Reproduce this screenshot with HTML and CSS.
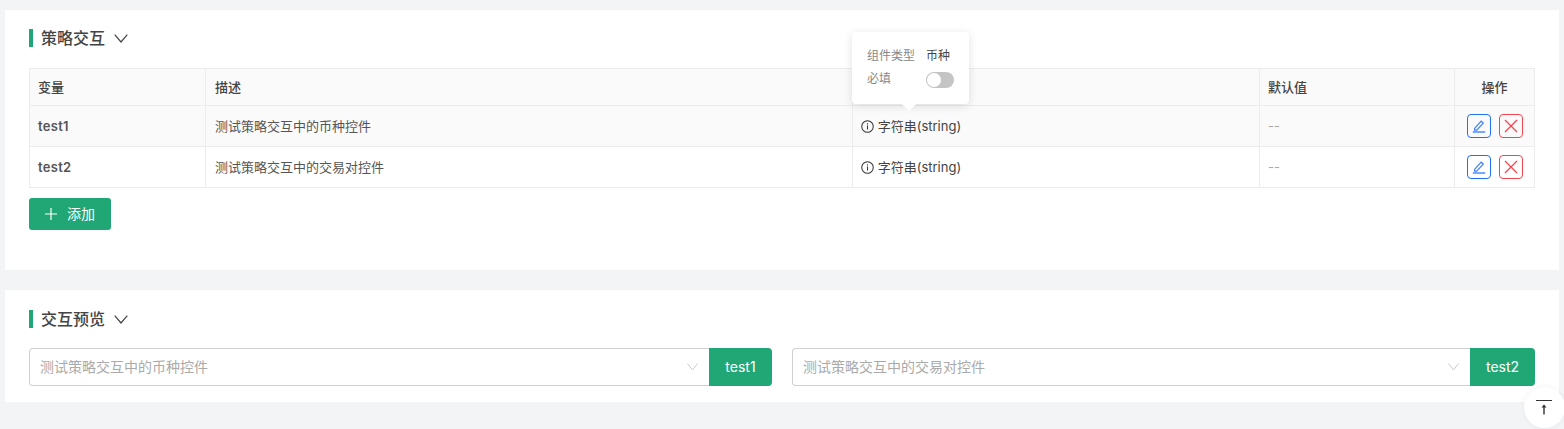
FILE: index.html
```html
<!DOCTYPE html>
<html lang="zh-CN">
<head>
  <meta charset="UTF-8" />
  <title>策略交互</title>
  <link rel="stylesheet" href="styles.css">
</head>
<body>
  <section class="panel panel-table">
    <div class="panel-title">
      <span class="title-text">策略交互</span>
      <svg class="title-arrow" viewBox="0 0 14 9" width="14" height="9"><path d="M.7.7 7 8 13.3.7" fill="none" stroke="#444" stroke-width="1.2"/></svg>
    </div>

    <table class="var-table">
      <colgroup>
        <col class="col-name"><col class="col-desc"><col class="col-type"><col class="col-default"><col class="col-action">
      </colgroup>
      <thead>
        <tr>
          <th>变量</th>
          <th>描述</th>
          <th></th>
          <th>默认值</th>
          <th class="center">操作</th>
        </tr>
      </thead>
      <tbody>
        <tr class="row-hover">
          <td class="var-name">test1</td>
          <td>测试策略交互中的币种控件</td>
          <td class="type-cell">
            <div class="popover">
              <div class="popover-row"><span class="popover-label">组件类型</span><span>币种</span></div>
              <div class="popover-row"><span class="popover-label">必填</span><span class="switch"></span></div>
            </div>
            <svg class="info" viewBox="0 0 14 14" width="13" height="13"><circle cx="7" cy="7" r="6.2" fill="none" stroke="#333" stroke-width="1.1"/><path d="M7 6v4.2M7 3.6v1.2" stroke="#333" stroke-width="1.1"/></svg>
            字符串(string)
          </td>
          <td class="muted">--</td>
          <td>
            <div class="actions">
              <button class="icon-btn edit"><svg viewBox="0 0 14 14" width="14" height="14"><path d="M2.600 9.400 9.200 2.200l2.100 1.900-6.600 7H2.600z" fill="none" stroke="#3f7fff" stroke-width="1.200"/><path d="M.8 13h12.400" stroke="#1f6fff" stroke-width="1.200"/></svg></button>
              <button class="icon-btn del"><svg viewBox="0 0 14 14" width="14" height="14"><path d="M1 1l12 12M13 1 1 13" stroke="#f5454f" stroke-width="1.300"/></svg></button>
            </div>
          </td>
        </tr>
        <tr>
          <td class="var-name">test2</td>
          <td>测试策略交互中的交易对控件</td>
          <td class="type-cell">
            <svg class="info" viewBox="0 0 14 14" width="13" height="13"><circle cx="7" cy="7" r="6.2" fill="none" stroke="#333" stroke-width="1.1"/><path d="M7 6v4.2M7 3.6v1.2" stroke="#333" stroke-width="1.1"/></svg>
            字符串(string)
          </td>
          <td class="muted">--</td>
          <td>
            <div class="actions">
              <button class="icon-btn edit"><svg viewBox="0 0 14 14" width="14" height="14"><path d="M2.600 9.400 9.200 2.200l2.100 1.900-6.600 7H2.600z" fill="none" stroke="#3f7fff" stroke-width="1.200"/><path d="M.8 13h12.400" stroke="#1f6fff" stroke-width="1.200"/></svg></button>
              <button class="icon-btn del"><svg viewBox="0 0 14 14" width="14" height="14"><path d="M1 1l12 12M13 1 1 13" stroke="#f5454f" stroke-width="1.300"/></svg></button>
            </div>
          </td>
        </tr>
      </tbody>
    </table>

    <button class="add-btn">
      <svg viewBox="0 0 12 12" width="12" height="12"><path d="M6 0v12M0 6h12" stroke="#fff" stroke-width="1.200"/></svg>
      <span class="add-label">添加</span>
    </button>
  </section>

  <section class="panel panel-preview">
    <div class="panel-title">
      <span class="title-text">交互预览</span>
      <svg class="title-arrow" viewBox="0 0 14 9" width="14" height="9"><path d="M.7.7 7 8 13.3.7" fill="none" stroke="#444" stroke-width="1.2"/></svg>
    </div>
    <div class="preview-grid">
      <div class="select-group">
        <div class="select">
          <span>测试策略交互中的币种控件</span>
          <svg viewBox="0 0 11 8" width="11" height="8"><path d="M.5.5 5.500 7l5-6.500" fill="none" stroke="#ccc" stroke-width="1"/></svg>
        </div>
        <div class="addon">test1</div>
      </div>
      <div class="select-group">
        <div class="select">
          <span>测试策略交互中的交易对控件</span>
          <svg viewBox="0 0 11 8" width="11" height="8"><path d="M.5.5 5.500 7l5-6.500" fill="none" stroke="#ccc" stroke-width="1"/></svg>
        </div>
        <div class="addon addon-wide">test2</div>
      </div>
    </div>
  </section>

  <button class="back-top">
    <svg viewBox="0 0 16 15" width="16" height="15"><path d="M0 .5h16" stroke="#333" stroke-width="1"/><path d="M8 14.500V5.500" stroke="#333" stroke-width="1.400"/><path d="M8 4.500l-2.500 3h5z" fill="#333"/></svg>
  </button>
</body>
</html>
```

FILE: styles.css
```css
* {
  box-sizing: border-box;
}

html, body {
  height: 100%;
}

body {
  margin: 0;
  padding: 10px 5px 0;
  background: #f2f4f6;
  overflow: hidden;
  position: relative;
  font-family: "Inter", "Noto Sans CJK SC", sans-serif;
  font-size: 13px;
  line-height: 18px;
  color: #444;
}

.panel {
  background: #fff;
  padding: 19px 24px 0;
}

.panel-table {
  height: 260px;
  margin-bottom: 20px;
}

.panel-preview {
  height: 112px;
  padding-top: 20px;
}

.panel-title {
  display: flex;
  align-items: center;
  height: 18px;
  margin-bottom: 21px;
}

.panel-preview .panel-title {
  margin-bottom: 20px;
}

.title-text {
  border-left: 4px solid #21a675;
  padding-left: 8px;
  font-size: 16px;
  line-height: 18px;
  font-weight: 500;
  color: #444;
}

.title-arrow {
  margin-left: 9px;
}

.var-table {
  width: 1505px;
  border-collapse: collapse;
  table-layout: fixed;
  color: #555;
}

.col-name { width: 176px; }
.col-desc { width: 647px; }
.col-type { width: 407px; }
.col-default { width: 195px; }
.col-action { width: 80px; }

.var-table th, .var-table td {
  border: 1px solid #ececec;
  padding: 0 8px;
  text-align: left;
  font-size: 13px;
}

.var-table th:nth-child(2), .var-table td:nth-child(2) {
  padding-left: 9px;
}

.var-table th {
  height: 37px;
  background: #fafafa;
  font-weight: 500;
  color: #444;
}

.var-table td {
  height: 41px;
}

.var-table th.center {
  text-align: center;
}

.row-hover td {
  background: #fafafa;
}

.var-name {
  font-weight: 600;
  letter-spacing: 0.3px;
}

.type-cell {
  position: relative;
  color: #444;
}

.info {
  vertical-align: -2px;
}

.muted {
  color: #aaa;
}

.actions {
  display: flex;
  justify-content: center;
  gap: 8px;
}

.icon-btn {
  width: 24px;
  height: 24px;
  padding: 0;
  display: flex;
  align-items: center;
  justify-content: center;
  background: transparent;
  border-radius: 4px;
  border: 1px solid;
}

.edit {
  border-color: #1f6fff;
}

.del {
  border-color: #f5454f;
}

.add-btn {
  display: flex;
  align-items: center;
  gap: 10px;
  margin-top: 10px;
  width: 82px;
  height: 32px;
  padding: 0 0 0 16px;
  border: none;
  border-radius: 3px;
  background: #21a675;
  color: #fff;
  font-family: inherit;
  font-size: 14px;
}

.add-label {
  padding-bottom: 2px;
}

.popover {
  position: absolute;
  left: -1px;
  bottom: 42px;
  width: 117px;
  height: 72px;
  padding: 15px 15px 0;
  background: #fff;
  border-radius: 4px;
  box-shadow: 0 2px 10px rgba(0, 0, 0, 0.12);
  font-size: 12px;
  z-index: 2;
}

.popover::after {
  content: "";
  position: absolute;
  left: 52px;
  bottom: -5px;
  width: 10px;
  height: 10px;
  background: #fff;
  transform: rotate(45deg);
}

.popover-row {
  display: flex;
  align-items: center;
  height: 18px;
  margin-bottom: 5px;
}

.popover-label {
  width: 59px;
  color: #888;
}

.switch {
  position: relative;
  width: 28px;
  height: 16px;
  margin-top: 2px;
  border-radius: 8px;
  background: #c4c4c4;
}

.switch::before {
  content: "";
  position: absolute;
  left: 1px;
  top: 1px;
  width: 14px;
  height: 14px;
  border-radius: 50%;
  background: #fff;
}

.preview-grid {
  display: grid;
  grid-template-columns: 743px 743px;
  gap: 20px;
}

.select-group {
  display: flex;
  height: 38px;
}

.select {
  flex: 1;
  display: flex;
  align-items: center;
  justify-content: space-between;
  padding: 0 11px 0 10px;
  border: 1px solid #d0d0d0;
  border-right: none;
  border-radius: 4px 0 0 4px;
  color: #aaa;
  font-size: 14px;
}

.addon {
  width: 63px;
  display: flex;
  align-items: center;
  justify-content: center;
  border-radius: 0 4px 4px 0;
  background: #21a675;
  color: #fff;
  font-size: 14px;
}

.addon-wide {
  width: 65px;
}

.back-top {
  position: absolute;
  left: 1524px;
  top: 387px;
  width: 41px;
  height: 41px;
  padding: 0 1px 0 0;
  border: none;
  border-radius: 50%;
  background: #fff;
  box-shadow: 0 0 6px rgba(0, 0, 0, 0.06);
  display: flex;
  align-items: center;
  justify-content: center;
}
```
